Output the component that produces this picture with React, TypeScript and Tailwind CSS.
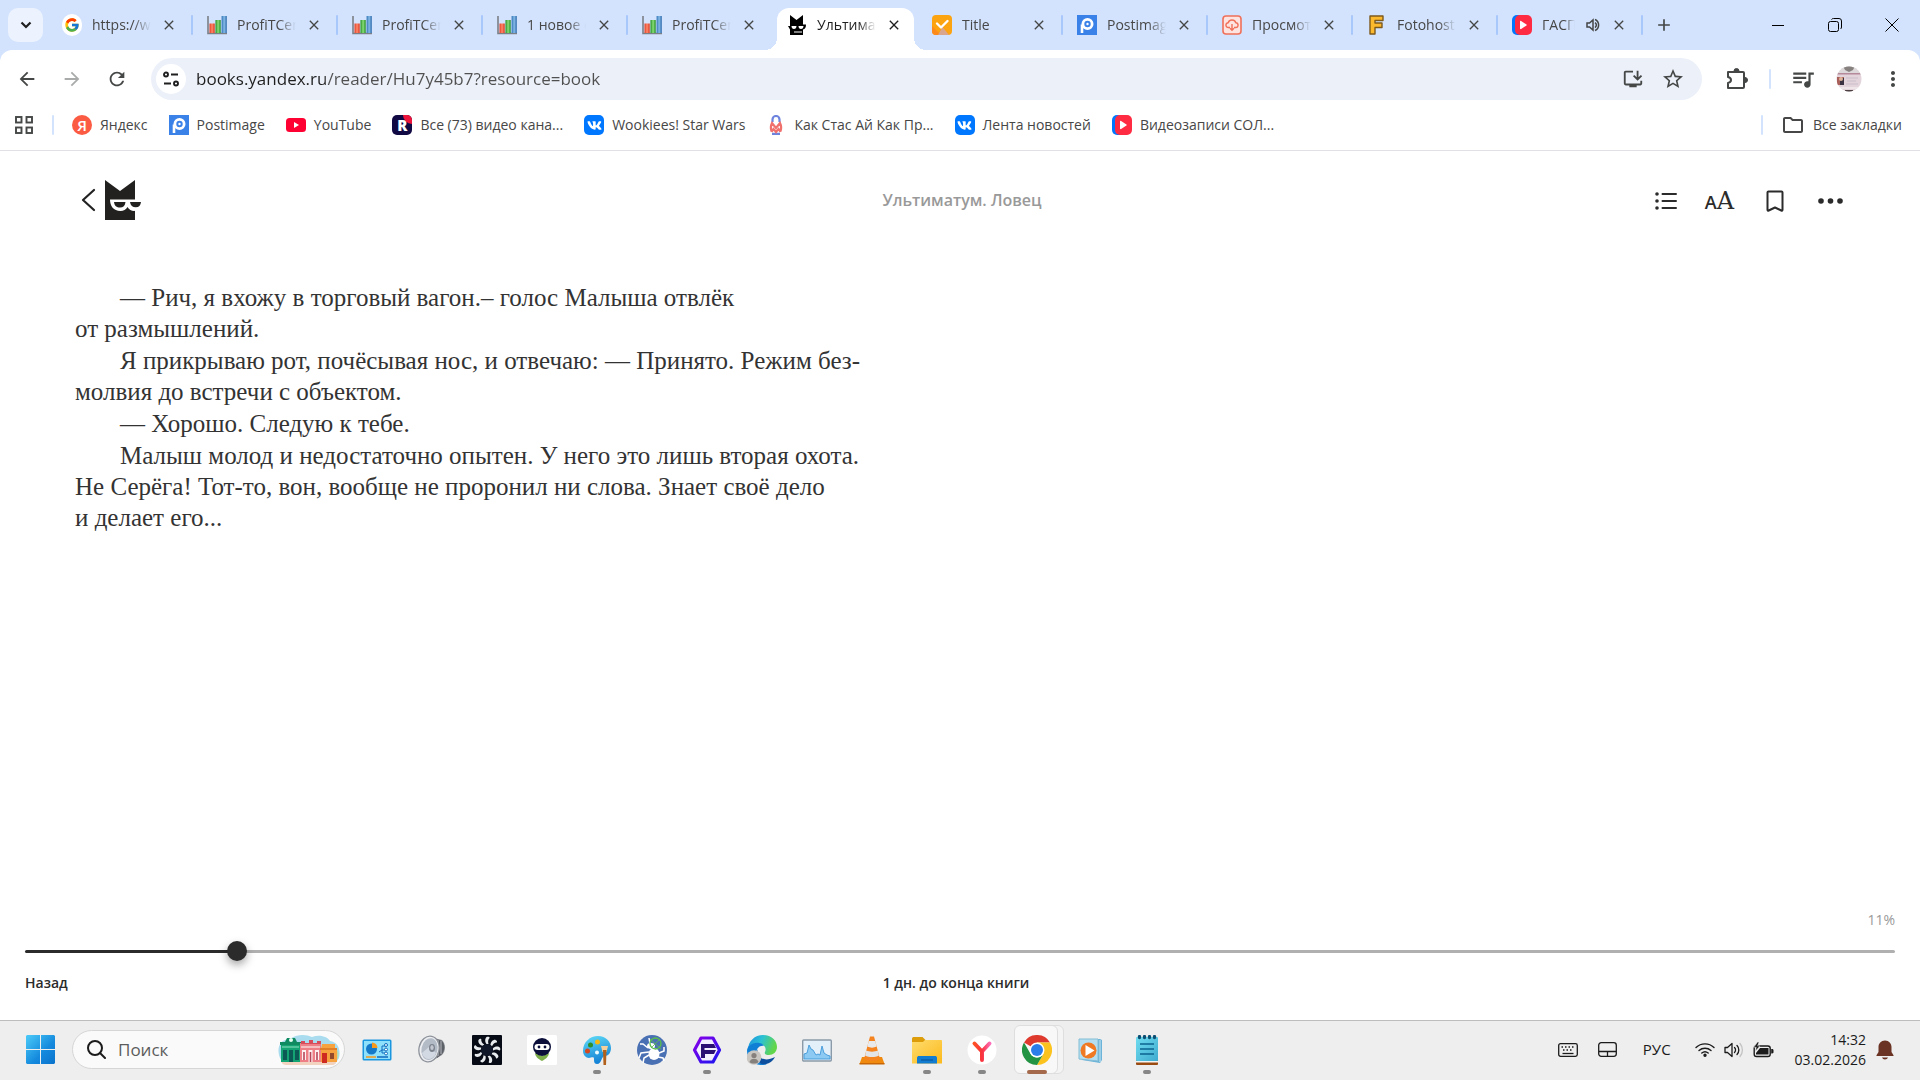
import React from "react";
import {
  MdArrowBack,
  MdArrowForward,
  MdRefresh,
  MdStarOutline,
  MdQueueMusic,
  MdMoreVert,
  MdOutlineInstallDesktop,
  MdOutlineFolder,
  MdClose,
  MdAdd,
} from "react-icons/md";
import { FcGoogle } from "react-icons/fc";
import { FaVk } from "react-icons/fa";

const ui = "font-['Open_Sans','Noto_Sans',sans-serif]";

/* ---------- site icons ---------- */

function ChartIcon() {
  return (
    <svg viewBox="0 0 20 20" className="size-5">
      <defs>
        <linearGradient id="barR" x1="0" x2="1"><stop offset="0" stopColor="#e23a20" /><stop offset=".5" stopColor="#ff8a6c" /><stop offset="1" stopColor="#d93219" /></linearGradient>
        <linearGradient id="barG" x1="0" x2="1"><stop offset="0" stopColor="#1f8a20" /><stop offset=".5" stopColor="#8be07a" /><stop offset="1" stopColor="#1f8a20" /></linearGradient>
        <linearGradient id="barB" x1="0" x2="1"><stop offset="0" stopColor="#2f72b5" /><stop offset=".5" stopColor="#86bbe6" /><stop offset="1" stopColor="#2b69aa" /></linearGradient>
      </defs>
      <path d="M1 1v17.500h19" fill="none" stroke="#7b7f86" strokeWidth="1.600" />
      <rect x="2.500" y="8.500" width="5.200" height="9.500" fill="url(#barR)" />
      <rect x="8.500" y="5" width="5.200" height="13" fill="url(#barG)" />
      <rect x="14.600" y="1" width="5.200" height="17" fill="url(#barB)" />
    </svg>
  );
}

function CatFavicon() {
  return (
    <svg viewBox="0 0 36 40" className="size-5">
      <path d="M4 0l13 10L30 0v19h6c0 6-2 9-6 10v11H4V29L0 22h4z" fill="#000" />
      <path d="M7 22h10c0 4-2 6-5 6s-5-2-5-6zm14 0h10c0 4-2 6-5 6s-5-2-5-6z" fill="#fff" />
      <path d="M12 33h16v2H12z" fill="#fff" />
    </svg>
  );
}

function CheckIcon() {
  return (
    <svg viewBox="0 0 20 20" className="size-5">
      <rect width="20" height="20" rx="4" fill="#fca311" />
      <path d="M0 11l9 9H4a4 4 0 0 1-4-4z" fill="#ff8a1c" />
      <path d="M10.500 12L17 20H6z" fill="#d9a58c" />
      <path d="M5 8.500l4 4L15.500 6" fill="none" stroke="#fff" strokeWidth="2.400" strokeLinecap="round" strokeLinejoin="round" />
    </svg>
  );
}

function PostimageIcon() {
  return (
    <svg viewBox="0 0 20 20" className="size-5">
      <rect width="20" height="20" fill="#3b82e8" />
      <circle cx="10.500" cy="9" r="4.600" fill="none" stroke="#fff" strokeWidth="2.800" />
      <path d="M5 9.500V18" stroke="#fff" strokeWidth="2.600" />
      <circle cx="10.500" cy="9" r="1.200" fill="#fff" />
    </svg>
  );
}

function CloudIcon() {
  return (
    <svg viewBox="0 0 20 20" className="size-5" fill="none" stroke="#f0705a">
      <rect x="1" y="1" width="18" height="18" rx="3" strokeWidth="1.600" fill="#fde4e0" />
      <path d="M8 12.500H6.500a2.400 2.400 0 0 1-.3-4.800 4 4 0 0 1 7.600 0 2.400 2.400 0 0 1-.3 4.800H12M10 9v6M8 13.300l2 1.900 2-1.900" strokeWidth="1.400" />
    </svg>
  );
}

function FotoIcon() {
  return (
    <svg viewBox="0 0 20 20" className="size-5" strokeLinejoin="round">
      <path d="M3 1h13v4.500H8V8h7v4.500H8V19H3z" fill="#fdb92e" stroke="#7d5a1c" strokeWidth="1.400" />
    </svg>
  );
}

function VkVideoIcon() {
  return (
    <svg viewBox="0 0 20 20" className="size-5">
      <rect width="17" height="20" rx="5" fill="#0077ff" />
      <rect x="3" width="17" height="20" rx="5" fill="#ff2b42" />
      <path d="M8 6.500v7c0 .6.600.9 1.100.6l5.300-3.500a.7.7 0 0 0 0-1.200L9.100 5.900C8.600 5.600 8 5.900 8 6.500z" fill="#fff" />
    </svg>
  );
}

function VkIcon() {
  return (
    <span className="flex size-5 items-center justify-center rounded-[5px] bg-[#0077ff] text-white">
      <FaVk className="size-[15px]" />
    </span>
  );
}

function YaIcon() {
  return (
    <span className="flex size-5 items-center justify-center rounded-full bg-[#fc5b43] text-[15px] leading-5 font-semibold text-white">Я</span>
  );
}

function YoutubeIcon() {
  return (
    <svg viewBox="0 0 20 20" className="size-5">
      <rect y="3" width="20" height="14" rx="3.500" fill="#ff0033" />
      <path d="M8 7v6l5-3z" fill="#fff" />
    </svg>
  );
}

function RutubeIcon() {
  return (
    <span className="relative flex size-5 items-center justify-center overflow-hidden rounded-[5px] bg-[#100943]">
      <svg viewBox="0 0 20 20" className="absolute size-5"><path d="M11 0h9v9a9 9 0 0 1-9-9z" fill="#ed143b" /></svg>
      <span className="relative text-[15px] leading-5 font-extrabold text-white">R</span>
    </span>
  );
}

function MIcon() {
  return (
    <svg viewBox="0 0 20 20" className="size-5" fill="none" strokeWidth="2.200">
      <path d="M6.500 7V4.500a3.500 3.500 0 0 1 7 0V7M6 18.800h8" stroke="#6d83dd" />
      <path d="M5.500 16.500c-1-3 -.5-6.500.5-8.500l4 5 4-5c1 2 1.500 5.500.5 8.500M5.500 17l2-3 2.500 3 2.500-3 2 3" stroke="#f0706e" />
    </svg>
  );
}

function SpeakerSmall() {
  return (
    <svg viewBox="0 0 16 16" className="size-4 shrink-0" fill="none" stroke="#444746" strokeWidth="1.500">
      <path d="M2 6h2.500L8 3v10L4.500 10H2z" />
      <path d="M10 5.500a3 3 0 0 1 0 5M10 2.500a6 6 0 0 1 0 11" />
    </svg>
  );
}

/* ---------- browser chrome ---------- */

type TabInfo = { title: string; icon: React.ReactNode; active?: boolean; audio?: boolean; divider?: boolean };

const tabs: TabInfo[] = [
  { title: "https://www", icon: <FcGoogle className="size-[22px] rounded-full bg-white p-0.5" />, divider: true },
  { title: "ProfiTCentr", icon: <ChartIcon />, divider: true },
  { title: "ProfiTCentr", icon: <ChartIcon />, divider: true },
  { title: "1 новое со", icon: <ChartIcon />, divider: true },
  { title: "ProfiTCentr", icon: <ChartIcon /> },
  { title: "Ультиматум", icon: <CatFavicon />, active: true },
  { title: "Title", icon: <CheckIcon />, divider: true },
  { title: "Postimage", icon: <PostimageIcon />, divider: true },
  { title: "Просмотр", icon: <CloudIcon />, divider: true },
  { title: "Fotohosting", icon: <FotoIcon />, divider: true },
  { title: "ГАСПАР", icon: <VkVideoIcon />, audio: true, divider: true },
];

function Tab({ title, icon, active, audio, divider }: TabInfo) {
  return (
    <div className="relative flex h-full w-[145px] min-w-0 shrink items-center">
      {active && (
        <span className="absolute inset-x-1 top-2 bottom-0 rounded-t-xl bg-white">
          <span className="absolute bottom-0 -left-3 size-3 bg-[radial-gradient(circle_at_0_0,transparent_12px,white_12px)]" />
          <span className="absolute -right-3 bottom-0 size-3 bg-[radial-gradient(circle_at_100%_0,transparent_12px,white_12px)]" />
        </span>
      )}
      <button className={`relative flex min-w-0 flex-1 items-center gap-2.5 pl-3.5 text-left text-sm ${active ? "text-[#1f1f1f]" : "text-[#474747]"}`}>
        <span className="flex size-5 shrink-0 items-center justify-center">{icon}</span>
        <span className="min-w-0 flex-1 overflow-hidden whitespace-nowrap [mask-image:linear-gradient(to_right,black_70%,transparent)]">{title}</span>
        {audio && <SpeakerSmall />}
      </button>
      <button aria-label={`Закрыть ${title}`} className={`relative mr-3 flex size-6 items-center justify-center ${active ? "text-[#1f1f1f]" : "text-[#444746]"} ${audio ? "ml-1.5" : "ml-1.5"}`}>
        <MdClose className="size-4" />
      </button>
      {divider && <span className="absolute right-0 h-5 w-0.5 rounded bg-[#a8c7fa]" />}
    </div>
  );
}

function TabStrip() {
  return (
    <div className="flex h-[50px] items-center bg-[#d3e3fd]">
      <button aria-label="Поиск вкладок" className="ml-2 mr-[5px] flex h-[34px] w-[35px] shrink-0 items-center justify-center rounded-[10px] bg-[#ecf3fe]">
        <svg viewBox="0 0 12 12" className="size-3" fill="none" stroke="#1f1f1f" strokeWidth="2.200"><path d="M1.500 3.500L6 8l4.500-4.500" /></svg>
      </button>
      <div className="flex h-full min-w-0">
        {tabs.map((t, i) => <Tab key={i} {...t} />)}
      </div>
      <button aria-label="Новая вкладка" className="ml-[9px] flex size-6 shrink-0 items-center justify-center text-[#444746]"><MdAdd className="size-5" /></button>
      <div className="ml-auto flex h-full shrink-0">
        <button aria-label="Свернуть" className="flex w-[57px] items-center justify-center"><span className="h-px w-3 bg-black" /></button>
        <button aria-label="Восстановить" className="flex w-[57px] items-center justify-center">
          <svg viewBox="0 0 14 14" className="size-3.5" fill="none" stroke="#000"><rect x=".5" y="3.500" width="10" height="10" rx="2" /><path d="M3.500 1.500c.5-.7 1-1 2-1H11A2.500 2.500 0 0 1 13.500 3v6c0 1-.3 1.500-1 2" /></svg>
        </button>
        <button aria-label="Закрыть окно" className="flex w-[57px] items-center justify-center">
          <svg viewBox="0 0 14 14" className="size-3.5" stroke="#000"><path d="M.5.5l13 13M13.500.5l-13 13" /></svg>
        </button>
      </div>
    </div>
  );
}

function Toolbar() {
  return (
    <div className="bg-[#d3e3fd]">
      <div className="flex h-[58px] items-center rounded-t-xl bg-white px-[15px] text-[#444746]">
        <button aria-label="Назад" className="flex size-6 items-center justify-center"><MdArrowBack className="size-[22px]" /></button>
        <button aria-label="Вперёд" className="ml-[21px] flex size-6 items-center justify-center text-[#a9aaaa]"><MdArrowForward className="size-[22px]" /></button>
        <button aria-label="Обновить" className="ml-[21px] flex size-6 items-center justify-center"><MdRefresh className="size-[22px]" /></button>
        <div className="ml-[22px] flex h-[42px] min-w-0 flex-1 items-center rounded-full bg-[#ecf0f9] px-[5px]">
          <button aria-label="Сведения о сайте" className="flex size-[30px] shrink-0 items-center justify-center rounded-full bg-white">
            <svg viewBox="0 0 18 16" className="h-4 w-[18px]" fill="none" stroke="#1f1f1f" strokeWidth="1.900">
              <circle cx="4" cy="3.500" r="2" /><path d="M9 3.500h7M2 12.500h7" /><circle cx="14" cy="12.500" r="2" />
            </svg>
          </button>
          <label htmlFor="url" className="sr-only">Адресная строка</label>
          <input
            id="url"
            defaultValue="books.yandex.ru/reader/Hu7y45b7?resource=book"
            className="ml-2.5 min-w-0 flex-1 bg-[linear-gradient(to_right,#1f1f1f_129px,#505050_129px)] bg-clip-text text-[17px] text-transparent outline-none"
          />
          <button aria-label="Установить приложение" className="flex size-6 items-center justify-center"><MdOutlineInstallDesktop className="size-[22px]" /></button>
          <button aria-label="Добавить в закладки" className="ml-4 mr-3 flex size-6 items-center justify-center"><MdStarOutline className="size-6" /></button>
        </div>
        <button aria-label="Расширения" className="ml-[22px] flex size-6 items-center justify-center">
          <svg viewBox="0 0 24 24" className="size-6" fill="none" stroke="currentColor" strokeWidth="2" strokeLinejoin="round">
            <path d="M4 5h15a1 1 0 0 1 1 1v14a1 1 0 0 1-1 1H4v-5c4-1 4-5 0-6z" />
            <path d="M10 4a2.500 2.500 0 0 1 5 0zM21 10.500a2.500 2.500 0 0 1 0 5z" fill="currentColor" strokeWidth="1" />
          </svg>
        </button>
        <span className="ml-[21px] h-5 w-0.5 rounded bg-[#d3e3fd]" />
        <button aria-label="Управление мультимедиа" className="ml-5 flex size-6 items-center justify-center"><MdQueueMusic className="size-[26px] shrink-0" /></button>
        <button aria-label="Профиль" className="ml-[21px] flex size-[26px] items-center justify-center">
          <svg viewBox="0 0 26 26" className="size-[26px]">
            <defs><clipPath id="ava"><circle cx="13" cy="13" r="12.500" /></clipPath></defs>
            <g clipPath="url(#ava)">
              <rect width="26" height="26" fill="#e3d3da" />
              <rect width="26" height="7" fill="#ddd8da" />
              <path d="M7 0h12l-2 4-4 2-4-2z" fill="#86807f" />
              <rect y="7" width="26" height="1.500" fill="#b58a9a" />
              <rect x="1" y="11" width="7" height="8" fill="#a9605a" />
              <rect x="4" y="12" width="4" height="7" fill="#3b3342" />
              <circle cx="5" cy="13" r="2" fill="#e0b49a" />
              <path d="M10 12h12M11 15h9M10 18h12" stroke="#c9bfcb" strokeWidth="1" />
              <rect y="21" width="26" height="2" fill="#efe6ea" />
              <path d="M9 24h8v2H9z" fill="#4c4042" />
            </g>
          </svg>
        </button>
        <button aria-label="Меню" className="ml-[19px] flex size-6 items-center justify-center"><MdMoreVert className="size-6" /></button>
      </div>
    </div>
  );
}

const bookmarks = [
  { label: "Яндекс", icon: <YaIcon /> },
  { label: "Postimage", icon: <PostimageIcon /> },
  { label: "YouTube", icon: <YoutubeIcon /> },
  { label: "Все (73) видео кана...", icon: <RutubeIcon /> },
  { label: "Wookiees! Star Wars", icon: <VkIcon /> },
  { label: "Как Стас Ай Как Пр...", icon: <MIcon /> },
  { label: "Лента новостей", icon: <VkIcon /> },
  { label: "Видеозаписи СОЛ...", icon: <VkVideoIcon /> },
];

function BookmarksBar() {
  return (
    <nav className="flex h-[43px] items-center border-b border-[#dfe1e5] bg-white pb-2 pl-[15px] pr-[18px] text-sm text-[#474747]">
      <button aria-label="Приложения">
        <svg viewBox="0 0 18 18" className="size-[18px]" fill="none" stroke="#444746" strokeWidth="1.900">
          <rect x="1" y="1" width="5.500" height="5.500" /><rect x="11.500" y="1" width="5.500" height="5.500" /><rect x="1" y="11.500" width="5.500" height="5.500" /><rect x="11.500" y="11.500" width="5.500" height="5.500" />
        </svg>
      </button>
      <span className="ml-[19px] mr-[18px] h-5 w-0.5 rounded bg-[#d3e3fd]" />
      <div className="flex min-w-0 gap-[21px] overflow-hidden">
        {bookmarks.map((b) => (
          <a key={b.label} href="#" className="flex shrink-0 items-center gap-2">{b.icon}{b.label}</a>
        ))}
      </div>
      <span className="ml-auto h-5 w-0.5 rounded bg-[#d3e3fd]" />
      <button className="ml-[18px] flex shrink-0 items-center gap-2"><MdOutlineFolder className="size-6" />Все закладки</button>
    </nav>
  );
}

/* ---------- reader ---------- */

function ReaderHeader() {
  return (
    <header className="grid grid-cols-[1fr_auto_1fr] items-center pl-[81px] pr-[77px] pt-[29px]">
      <a href="#" aria-label="Букмейт" className="flex items-center gap-[9px]">
        <svg viewBox="0 0 15 24" className="h-6 w-[15px]" fill="none" stroke="#222" strokeWidth="2.200" strokeLinecap="round" strokeLinejoin="round"><path d="M13 2L2 12l11 10" /></svg>
        <svg viewBox="0 0 36 40" className="h-10 w-9">
          <path d="M0 0l15 11L30 0v40H0z" fill="#22211f" />
          <path d="M5 19.500h31V22c0 5-3 9-7 9-2.500 0-5-1.500-6.500-4-1.500 2.500-4 4-7 4C8.500 31 5 26 5 19.500z" fill="#fff" />
          <path d="M9 22h11.500c-.4 3.800-2.200 5.600-5.500 5.600S9.400 25.800 9 22zM25 22h11c-.4 3.500-2 5.200-5.200 5.200S25.400 25.500 25 22z" fill="#22211f" />
        </svg>
      </a>
      <h1 className="text-base font-semibold text-[#999]">Ультиматум. Ловец</h1>
      <div className="flex items-center justify-end pt-0.5 text-[#2b2b2b]">
        <button aria-label="Содержание">
          <svg viewBox="0 0 22 20" className="h-5 w-[22px]" fill="none" stroke="currentColor" strokeWidth="2" strokeLinecap="round">
            <path d="M7.500 3H21M7.500 10H21M7.500 17H21" /><path d="M2 3h.01M2 10h.01M2 17h.01" strokeWidth="3.600" />
          </svg>
        </button>
        <button aria-label="Настройки шрифта" className="ml-7 flex items-baseline leading-6">
          <span className="font-['Open_Sans',sans-serif] text-lg leading-6 font-semibold">A</span>
          <span className="font-['DejaVu_Serif',serif] text-2xl leading-6">A</span>
        </button>
        <button aria-label="Закладка" className="ml-8">
          <svg viewBox="0 0 18 22" className="h-[22px] w-[18px]" fill="none" stroke="currentColor" strokeWidth="2" strokeLinejoin="round"><path d="M2.500 1.500h13a1 1 0 0 1 1 1v17.300c0 .8-.5 1-1.200.7L9 17.500l-6.300 3c-.7.3-1.200.1-1.200-.7V2.500a1 1 0 0 1 1-1z" /></svg>
        </button>
        <button aria-label="Ещё" className="ml-[34px]">
          <svg viewBox="0 0 25 6" className="h-1.5 w-[25px]" fill="currentColor"><circle cx="3" cy="3" r="2.800" /><circle cx="12.500" cy="3" r="2.800" /><circle cx="22" cy="3" r="2.800" /></svg>
        </button>
      </div>
    </header>
  );
}

const paragraphs = [
  ["— Рич, я вхожу в торговый вагон.– голос Малыша отвлёк", "от размышлений."],
  ["Я прикрываю рот, почёсывая нос, и отвечаю: — Принято. Режим без-", "молвия до встречи с объектом."],
  ["— Хорошо. Следую к тебе."],
  ["Малыш молод и недостаточно опытен. У него это лишь вторая охота.", "Не Серёга! Тот-то, вон, вообще не проронил ни слова. Знает своё дело", "и делает его..."],
];

function Reader() {
  return (
    <main className="flex flex-1 flex-col bg-white">
      <ReaderHeader />
      <article className="mt-[62px] flex flex-col gap-px pl-[75px] font-['Liberation_Serif',serif] text-[25px] leading-[31px] text-[#333]">
        {paragraphs.map((lines, i) => (
          <p key={i} className="indent-[45px]">
            {lines.map((line, j) => (
              <React.Fragment key={j}>{j > 0 && <br />}{line}</React.Fragment>
            ))}
          </p>
        ))}
      </article>
      <footer className="mt-auto px-[25px] pb-[27px] text-sm">
        <div className="text-right leading-5 text-[#999]">11%</div>
        <label htmlFor="progress" className="sr-only">Прогресс чтения</label>
        <input
          id="progress"
          type="range"
          min={0}
          max={100}
          step={0.1}
          defaultValue={10.9}
          className="mt-[11px] block h-5 w-full appearance-none bg-transparent [&::-webkit-slider-runnable-track]:h-[3px] [&::-webkit-slider-runnable-track]:rounded-full [&::-webkit-slider-runnable-track]:bg-[linear-gradient(to_right,#2b2b2b_11%,#b0b0b0_11%)] [&::-webkit-slider-thumb]:-mt-[9px] [&::-webkit-slider-thumb]:size-5 [&::-webkit-slider-thumb]:appearance-none [&::-webkit-slider-thumb]:rounded-full [&::-webkit-slider-thumb]:bg-[#2b2b2b] [&::-webkit-slider-thumb]:shadow-[0_4px_8px_rgba(0,0,0,0.35)]"
        />
        <div className="mt-3 grid grid-cols-[1fr_auto_1fr] pr-2 leading-5 font-semibold text-[#2b2b2b]">
          <button className="justify-self-start">Назад</button>
          <span>1 дн. до конца книги</span>
        </div>
      </footer>
    </main>
  );
}

/* ---------- taskbar ---------- */

function SearchArt() {
  return (
    <svg viewBox="0 0 62 32" className="h-8 w-[62px]">
      <path d="M2 24C-2 14 2 5 12 5c6-5 16-5 22-2 8-3 16 0 18 4 8 1 11 9 9 17l-4 6H6z" fill="#a9dcee" />
      <path d="M50 14c8-2 12 3 10 10l-3 5-7-3z" fill="#b9dba8" />
      <path d="M3 27h56l-2 3c-1 1-2 1-3 1H8c-2 0-4-1-5-4z" fill="#f2d3c0" />
      <rect x="3" y="9" width="19" height="19" fill="#14a473" /><path d="M2 8h21v3H2zM9 4h8l2 4H7z" fill="#0f8a61" /><circle cx="13" cy="6" r="2" fill="#e9fff4" />
      <path d="M5 16h4v10H5zM11 16h4v12h-4zM17 16h4v10h-4z" fill="#0b5a55" /><path d="M4 13h17" stroke="#8fe0c2" />
      <rect x="22" y="9" width="21" height="19" fill="#ef7f86" /><path d="M23 7h4v2h4V6h4v3h4V7h4v3H23z" fill="#d84b5a" /><path d="M23 13h19" stroke="#fbe3e4" strokeWidth="1.300" />
      <path d="M24 16h4v10h-4zM30.500 16h4v12h-4zM37 16h4v10h-4z" fill="#fdf0f1" /><path d="M25.200 18h1.600v8h-1.600zM31.700 18h1.600v10h-1.600zM38.200 18h1.600v8h-1.600z" fill="#b5465a" />
      <path d="M44 10h13v5h2v13H43V15z" fill="#f6a23f" /><path d="M42 14h17v2H42z" fill="#e07f28" /><rect x="44" y="19" width="5" height="10" fill="#cf2a1f" /><path d="M52 19h4v6h-4z" fill="#934a2a" />
    </svg>
  );
}

const taskIcons: { name: string; run?: boolean; active?: boolean; art: React.ReactNode }[] = [
  { name: "Панель управления", art: <>
    <rect x=".5" y="4.500" width="29" height="21" rx="1.500" fill="#1b97e0" /><rect x="2" y="6" width="26" height="18" fill="#8fe0fb" />
    <circle cx="9.500" cy="14" r="5.500" fill="#1479c9" /><path d="M10 13V7.500a5.500 5.500 0 0 1 5.500 5.500z" fill="#f79a1c" />
    <path d="M17 17l3-2v-4h3M20 15h3M20 15v3h3" fill="none" stroke="#0f6cbd" /><g fill="#fff" stroke="#0f6cbd"><circle cx="24" cy="10" r="1.500" /><circle cx="24" cy="14.500" r="1.500" /><circle cx="24" cy="18.500" r="1.500" /></g>
    <path d="M4 22h10" stroke="#f79a1c" strokeWidth="1.500" /><path d="M15 22h11" stroke="#0f6cbd" strokeWidth="1.500" /></> },
  { name: "Звук", art: <>
    <path d="M13 2l12 3c4 4 4 11 0 15l-10 6z" fill="#8d9096" /><path d="M19 4l6 2c3 3.500 3 9 0 13l-5 4z" fill="#5c6067" /><path d="M21 5v16M24 6v13" stroke="#b9bcc2" />
    <ellipse cx="12" cy="14" rx="10" ry="13" fill="#eceef1" stroke="#8e939b" strokeWidth="1.300" transform="rotate(12 12 14)" /><ellipse cx="12.500" cy="14" rx="8" ry="11" fill="#b3bbc7" transform="rotate(12 12 14)" /><path d="M5 18c2 8 11 8 14 0l-7-6z" fill="#d3d9e2" /><ellipse cx="15" cy="13" rx="3" ry="4" fill="#7b828d" /><ellipse cx="15" cy="12.500" rx="1.700" ry="2.500" fill="#c2c7cf" /></> },
  { name: "Вентилятор", art: <>
    <rect width="30" height="30" rx="1" fill="#070b16" />
    <g fill="#e9ecee">{[0, 40, 80, 120, 160, 200, 240, 280, 320].map((a) => <path key={a} d="M14.500 9C12.500 6.500 13 3 15 1.800c1.500-.4 2.800.2 2.600 1.200C16 4.500 15.800 6.500 16.500 9z" transform={`rotate(${a} 15 15)`} />)}</g>
    <circle cx="15" cy="15" r="6" fill="#11182a" /></> },
  { name: "AdGuard VPN", art: <>
    <rect width="30" height="30" rx="1.500" fill="#fff" /><path d="M8 18l7 3 7-3c0 3-3 6-7 8-4-2-7-5-7-8z" fill="#7eae4b" />
    <circle cx="15" cy="12" r="9" fill="#0b0f3a" /><rect x="7.500" y="9" width="15" height="6" rx="3" fill="#fff" /><circle cx="12" cy="12" r="1.400" fill="#0b0f3a" /><circle cx="18" cy="12" r="1.400" fill="#0b0f3a" /></> },
  { name: "Paint", run: true, art: <>
    <defs><linearGradient id="pal" x1="0" y1="0" x2="0.300" y2="1"><stop offset="0" stopColor="#5fdcf7" /><stop offset="1" stopColor="#1583d6" /></linearGradient></defs>
    <path d="M16 1c8 0 13 6 13 12 0 5-3 8-6 8-4 0-3 8-8 8-3 0-3-3-3-5 0-3-3-1-5-1-3 0-6-3-6-7C1 7 8 1 16 1z" fill="url(#pal)" />
    <circle cx="8.500" cy="10" r="2.500" fill="#2c8f2c" /><circle cx="15.500" cy="7" r="2.500" fill="#f7b90f" /><circle cx="5.500" cy="16" r="2.500" fill="#d4481f" /><circle cx="15" cy="17.500" r="2" fill="#e9fbff" />
    <path d="M19 11h7l-1.500 6h-4z" fill="#f3cf9b" /><path d="M21 15h3.500l-.5 15h-2.500z" fill="#b1611b" /></> },
  { name: "Bug", art: <>
    <circle cx="15" cy="15" r="15" fill="#4a70b4" /><ellipse cx="17" cy="19" rx="5.500" ry="6" fill="#fff" /><ellipse cx="14" cy="11" rx="4" ry="3" fill="#fff" />
    <path d="M12 17L4 18l-2 5M12 20l-5 3-1 5M11 13L6 9 3 9M22 18l5-2v-4M21 22l5 1 1 3M13 9l-1-6" fill="none" stroke="#fff" strokeWidth="1.500" /><circle cx="18.500" cy="8.500" r="5.500" fill="none" stroke="#59bf4b" strokeWidth="1.300" /><path d="M13 4l11 10M23 4L14 13" stroke="#59bf4b" strokeWidth=".8" /></> },
  { name: "F", run: true, art: <>
    <defs><linearGradient id="hex" x1="0" y1="0" x2="1" y2="1"><stop offset="0" stopColor="#8a00e8" /><stop offset="1" stopColor="#1a14f0" /></linearGradient></defs>
    <path d="M9 3h12l6.500 12L21 27H9L2.500 15z" fill="#f2efff" stroke="url(#hex)" strokeWidth="3.200" strokeLinejoin="round" />
    <path d="M9 9h13l2 4H12.500v2H24l-2 4h-9v4H9z" fill="#2a1072" /></> },
  { name: "Edge", art: <>
    <defs><linearGradient id="edgeA" x1="0" y1="0" x2="1" y2="0.300"><stop offset="0" stopColor="#1b8fe0" /><stop offset=".5" stopColor="#2cc1d3" /><stop offset="1" stopColor="#62d64a" /></linearGradient></defs>
    <path d="M1 15C1 6 8 0 16 0c9 0 14 6 14 12 0 5-4 8-8 8-3 0-5-1-4-3 2-4-1-8-6-8-6 0-11 3-11 6z" fill="url(#edgeA)" />
    <path d="M0 16c0-5 6-9 12-8 2 0 4 1 5 3-5-1-9 4-7 9 1 5 5 9 10 9-10 4-20-4-20-13z" fill="#0f7fd6" />
    <path d="M11 14c-3 8 6 14 17 8-3 6-9 8-13 7-5-2-8-9-4-15z" fill="#0c4f9e" /><circle cx="7" cy="22.500" r="7.300" fill="#c9c5c1" /><circle cx="7" cy="20.500" r="2.600" fill="#85807b" /><path d="M2.500 27c1-4.500 8-4.500 9 0-2 2-7 2-9 0z" fill="#85807b" /></> },
  { name: "Монитор ресурсов", art: <>
    <rect x=".7" y="5" width="28.600" height="21" rx="1" fill="#e4f0f9" stroke="#8b9aa8" strokeWidth="1.400" />
    <path d="M2 24v-5l3-1 2-8 2 4 2 1 3 5 2-1 2 1 2-9 2 7 3 2 3 1v3z" fill="#8ccaf3" stroke="#3f97d8" strokeWidth=".9" /></> },
  { name: "VLC", art: <>
    <path d="M5 22h20l2.500 7h-25z" fill="#f08a0e" /><path d="M13 1.500h4L23 24c-3 2.500-13 2.500-16 0z" fill="#f5831f" /><path d="M11.800 6h6.400l1.500 5.500c-3 1.500-6.400 1.500-9.400 0z" fill="#e9eaec" /><path d="M9.300 15.500c3 1.500 8.400 1.500 11.400 0l1.300 5c-4 2-10 2-14 0z" fill="#e2e4e7" /><path d="M2.500 28h25v1.500h-25z" fill="#c86606" /></> },
  { name: "Проводник", run: true, art: <>
    <defs><linearGradient id="fold" x1="0" y1="0" x2="1" y2="1"><stop offset="0" stopColor="#ffdc6e" /><stop offset="1" stopColor="#fbb91b" /></linearGradient></defs>
    <path d="M0 3.500C0 2.500 1 2 2 2h8.500l3 3v4H0z" fill="#dd9c0a" /><path d="M0 7h11l2-2h16c.6 0 1 .4 1 1v22.500H0z" fill="url(#fold)" /><path d="M5 28.500V23c0-1.500 1-2 2-2h16c1 0 2 .5 2 2v5.500z" fill="#127cd0" /><path d="M9 25h12" stroke="#0a4f93" /></> },
  { name: "Яндекс Браузер", run: true, art: <>
    <defs><linearGradient id="yb" x1="5" y1="0" x2="25" y2="0" gradientUnits="userSpaceOnUse"><stop offset="0" stopColor="#ff5a1f" /><stop offset=".5" stopColor="#f9323c" /><stop offset="1" stopColor="#ff7ad0" /></linearGradient></defs>
    <circle cx="15" cy="15" r="14.500" fill="#fff" /><path d="M7.500 8.500l7.500 8 7.500-8M15 16v9" fill="none" stroke="url(#yb)" strokeWidth="4" strokeLinecap="round" strokeLinejoin="round" /></> },
  { name: "Chrome", active: true, art: <>
    <path d="M15 15L2 7.500A15 15 0 0 1 28 7.500H15z" fill="#df3a2e" /><path d="M15 7.500h13A15 15 0 0 1 15 30l6.500-11.200z" fill="#fcc31e" /><path d="M2 7.500A15 15 0 0 0 15 30l6.500-11.200A7.500 7.500 0 0 1 8.500 18.800z" fill="#229342" />
    <circle cx="15" cy="15" r="7.500" fill="#fff" /><circle cx="15" cy="15" r="6" fill="#2b7de9" /></> },
  { name: "Медиаплеер", art: <>
    <path d="M5 4h18l2 1v20l-2 3-18-3z" fill="#6bb3d8" /><path d="M2 4h19v22L2 24z" fill="#b5dff0" stroke="#82bcd6" /><path d="M23 5v22" stroke="#cfe9f5" /><circle cx="11.500" cy="15.500" r="8" fill="#f07a24" /><path d="M8.500 10v11l9-5.500z" fill="#fff" /></> },
  { name: "Блокнот", run: true, art: <>
    <defs><linearGradient id="note" x1="0" y1="0" x2="1" y2="1"><stop offset="0" stopColor="#6fdcf0" /><stop offset="1" stopColor="#3fabcf" /></linearGradient></defs>
    <rect x="4" y="25" width="22" height="5" rx="1" fill="#994b12" /><path d="M4 26h22v1.500H4z" fill="#f4f4f4" /><rect x="4" y="2" width="22" height="24" rx="1" fill="url(#note)" /><path d="M8 9h14M8 14h14M8 19h14" stroke="#0b6490" strokeWidth="1.700" />
    <g fill="#0b4f73">{[7.5, 12.5, 17.5, 22.5].map((x) => <ellipse key={x} cx={x} cy="2" rx="1.700" ry="2.200" />)}</g></> },
];

function Taskbar() {
  return (
    <footer className="flex h-[60px] items-center border-t border-[#bdbdbd] bg-[#eee] px-[26px] pb-0.5 text-[#1b1b1b]">
      <button aria-label="Пуск">
        <svg viewBox="0 0 29 29" className="size-[29px]">
          <defs><linearGradient id="win" x1="0" y1="0" x2="1" y2="1"><stop offset="0" stopColor="#4ccbf8" /><stop offset=".6" stopColor="#1489dd" /><stop offset="1" stopColor="#0a72cb" /></linearGradient></defs>
          <path d="M1 0h13v14H0V1zM15 0h13l1 1v13H15zM0 15h14v14H1l-1-1zM15 15h14v13l-1 1H15z" fill="url(#win)" />
        </svg>
      </button>
      <label className="ml-[17px] flex h-[39px] w-[273px] items-center rounded-full border border-[#d6d6d6] bg-[#fafafa] pl-3.5 pr-1">
        <svg viewBox="0 0 19 19" className="size-[19px] shrink-0" fill="none" stroke="#1b1b1b" strokeWidth="2" strokeLinecap="round"><circle cx="8" cy="8" r="7" /><path d="M13 13l5 5" /></svg>
        <input type="search" aria-label="Поиск" placeholder="Поиск" className="ml-3 min-w-0 flex-1 bg-transparent text-[17px] outline-none placeholder:text-[#5c5c5c]" />
        <SearchArt />
      </label>
      <div className="ml-1 flex h-full">
        {taskIcons.map((t) => (
          <button key={t.name} aria-label={t.name} className="relative flex w-[55px] items-center justify-center">
            {t.active && <span className="absolute left-[7px] h-[49px] w-12 rounded-md border border-[#dedede] bg-[#f4f4f4]" />}
            {t.active && <span className="absolute left-[5px] h-[49px] w-11 rounded-md border border-[#dedede] bg-[#f8f8f8]" />}
            <svg viewBox="0 0 30 30" className="relative size-[30px]">{t.art}</svg>
            {t.run && <span className="absolute bottom-1 h-1 w-2 rounded-full bg-[#868686]" />}
            {t.active && <span className="absolute bottom-1 h-1 w-5 rounded-full bg-[#a5694b]" />}
          </button>
        ))}
      </div>
      <div className="ml-auto flex items-center">
        <svg viewBox="0 0 20 14" className="h-3.5 w-5" fill="none" stroke="currentColor" strokeWidth="1.300"><rect x=".7" y=".7" width="18.600" height="12.600" rx="1.800" /><path d="M3.500 4h13M5 7h10" strokeDasharray="1.500 2" strokeWidth="1.600" /><path d="M4.500 10.500h11" /></svg>
        <svg viewBox="0 0 19 15" className="ml-5 h-[15px] w-[19px]" fill="none" stroke="currentColor" strokeWidth="1.300"><rect x=".7" y=".7" width="17.600" height="13.600" rx="2.500" /><path d="M1 9.500h17M9.500 9.500V14" /></svg>
        <button className="ml-[26px] text-[15px]">РУС</button>
        <button aria-label="Сеть, звук, батарея" className="ml-6 flex items-center gap-[9px]">
          <svg viewBox="0 0 20 15" className="h-[15px] w-5" fill="none" stroke="currentColor" strokeWidth="1.400" strokeLinecap="round"><path d="M1 5.500a13 13 0 0 1 18 0M4 8.500a9 9 0 0 1 12 0M6.800 11a5 5 0 0 1 6.400 0" /><circle cx="10" cy="13.200" r="1" fill="currentColor" /></svg>
          <svg viewBox="0 0 20 16" className="h-4 w-5" fill="none" stroke="currentColor" strokeWidth="1.300" strokeLinecap="round" strokeLinejoin="round"><path d="M1 5.500h2.500L8 1.500v13L3.500 10.500H1z" /><path d="M10.500 5.500a3.500 3.500 0 0 1 0 5M13 3.500a6.500 6.500 0 0 1 0 9" /><path d="M16 1.500a10 10 0 0 1 0 13" stroke="#c3c3c3" /></svg>
          <svg viewBox="0 0 21 16" className="h-4 w-[21px]"><rect x="1.200" y="4" width="16" height="10.500" rx="2.300" fill="none" stroke="currentColor" strokeWidth="1.400" /><path d="M3 12.500V11l4-5h8.500v6.500zM18.200 7h1c.8 0 1.300.6 1.300 1.300v2c0 .7-.5 1.200-1.300 1.200h-1z" fill="currentColor" /><path d="M4.500 0L.8 5.300h2.400L2.500 9 7 4H4.600L6 0z" fill="currentColor" stroke="#eee" strokeWidth=".5" /></svg>
        </button>
        <div className="ml-[21px] text-right text-sm leading-5"><div>14:32</div><div>03.02.2026</div></div>
        <svg viewBox="0 0 18 20" className="ml-2.5 h-5 w-[18px]" fill="#6b3324"><path d="M9 .5c4 0 6.500 3 6.500 6.500v5l2 3.200c.3.500 0 .8-.5.8H1c-.5 0-.8-.3-.5-.8l2-3.200V7C2.500 3.500 5 .5 9 .5zM6 17.500h6c-.5 1.300-1.600 2-3 2s-2.500-.7-3-2z" /></svg>
      </div>
    </footer>
  );
}

export default function App() {
  return (
    <div className={`flex min-h-screen flex-col bg-white ${ui}`}>
      <TabStrip />
      <Toolbar />
      <BookmarksBar />
      <Reader />
      <Taskbar />
    </div>
  );
}
